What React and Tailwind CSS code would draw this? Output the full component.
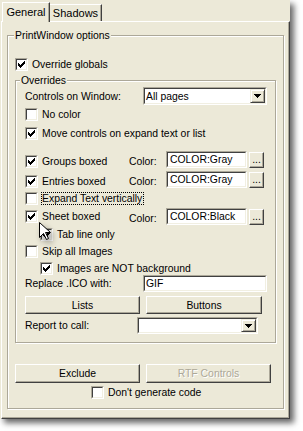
import React from 'react';

function CheckMark() {
  const px = [
    [6, 0], [5, 1], [6, 1], [0, 2], [4, 2], [5, 2], [6, 2],
    [0, 3], [1, 3], [3, 3], [4, 3], [5, 3], [0, 4], [1, 4], [2, 4], [3, 4], [4, 4],
    [1, 5], [2, 5], [3, 5], [2, 6],
  ];
  return (
    <svg width="7" height="7" className="block m-px" shapeRendering="crispEdges">
      {px.map(([x, y]) => (
        <rect key={x + '-' + y} x={x} y={y} width="1" height="1" fill="#000" />
      ))}
    </svg>
  );
}

function Check({ checked, className = '' }) {
  return (
    <span className={'block w-[13px] h-[13px] shrink-0 border border-t-[#ACA899] border-l-[#ACA899] border-b-white border-r-white ' + className}>
      <span className="block w-full h-full border border-t-[#404040] border-l-[#404040] border-b-[#F1EFE2] border-r-[#F1EFE2] bg-white">
        {checked && <CheckMark />}
      </span>
    </span>
  );
}

function Sunken({ className = '', children }) {
  return (
    <div className={'shrink-0 border border-t-[#ACA899] border-l-[#ACA899] border-b-white border-r-white ' + className}>
      <div className="flex h-full w-full items-center border border-t-[#404040] border-l-[#404040] border-b-[#F1EFE2] border-r-[#F1EFE2] bg-white">
        {children}
      </div>
    </div>
  );
}

function Combo({ className = '', value }) {
  return (
    <Sunken className={className}>
      <span className="flex-1 pl-[1px] whitespace-nowrap">{value}</span>
      <span className="flex h-full w-[15px] items-center justify-center border border-t-[#F1EFE2] border-l-[#F1EFE2] border-b-[#404040] border-r-[#404040] bg-[#ECE9D8] shadow-[inset_1px_1px_0_#fff,inset_-1px_-1px_0_#ACA899]">
        <svg width="7" height="4" className="block" shapeRendering="crispEdges">
          <path d="M0 0h7v1h-1v1h-1v1h-1v1h-1v-1h-1v-1h-1v-1h-1z" fill="#000" />
        </svg>
      </span>
    </Sunken>
  );
}

function Button({ className = '', disabled, children }) {
  return (
    <div
      className={
        'flex shrink-0 items-center justify-center border border-t-white border-l-white border-b-[#404040] border-r-[#404040] bg-[#ECE9D8] shadow-[inset_-1px_-1px_0_#ACA899] ' +
        (disabled ? 'text-[#ACA899] [text-shadow:1px_1px_0_#fff] ' : '') +
        className
      }
    >
      {children}
    </div>
  );
}

function CheckRow({ checked, label, className = '' }) {
  return (
    <div className={'flex h-[13px] items-center ' + className}>
      <Check checked={checked} />
      <span className="ml-[4px] whitespace-nowrap">{label}</span>
    </div>
  );
}

function ColorRow({ checked, label, value, className = '' }) {
  return (
    <div className={'flex h-[17px] items-start pl-[9px] ' + className}>
      <div className="flex w-[104px] h-[13px] mt-[4px] items-center">
        <Check checked={checked} />
        <span className="ml-[4px] whitespace-nowrap">{label}</span>
      </div>
      <span className="w-[37px] mt-[4px]">Color:</span>
      <Sunken className="w-[81px] h-[17px]">
        <span className="pl-[2px] whitespace-nowrap">{value}</span>
      </Sunken>
      <Button className="ml-[2px] mt-[1px] w-[15px] h-[16px] leading-[8px]">...</Button>
    </div>
  );
}

function Cursor() {
  return (
    <svg
      width="13"
      height="20"
      className="absolute left-[39px] top-[222px] drop-shadow-[3px_4px_3px_rgba(0,0,0,0.45)]"
    >
      <path
        d="M0.5 0.5 L0.5 15.5 L4.5 11.5 L7.5 17.5 L9.5 16.5 L6.5 10.5 L11.5 10.5 Z"
        fill="#fff"
        stroke="#000"
        strokeWidth="1"
      />
    </svg>
  );
}

export default function App() {
  return (
    <div className="relative w-[303px] h-[431px] overflow-hidden bg-white text-[10.4px] leading-[13px] text-black [font-family:'Liberation_Sans',Arial,sans-serif]">
      <div className="w-[290px] h-[419px] bg-[#ECE9D8] shadow-[4px_4px_6px_rgba(0,0,0,0.6)]">
        {/* tabs */}
        <div className="flex h-[21px] items-end pl-[2px]">
          <div className="relative z-10 -mb-px flex h-[20px] w-[48px] justify-center border-t border-l border-r border-t-white border-l-white border-r-[#404040] bg-[#ECE9D8] pt-[3px] shadow-[inset_-1px_0_0_#ACA899] text-[11px]">
            General
          </div>
          <div className="flex h-[17px] w-[52px] justify-center border-t border-r border-t-white border-r-[#404040] pt-[2px] shadow-[inset_-1px_0_0_#ACA899] text-[11px]">
            Shadows
          </div>
        </div>

        {/* panel */}
        <div className="ml-px w-[289px] h-[398px] border border-t-white border-l-white border-r-[#404040] border-b-[#404040] pl-[5px] pt-[7px] shadow-[inset_-1px_-1px_0_#ACA899]">
          <fieldset className="w-[277px] h-[380px] border border-[#ACA899] shadow-[1px_1px_0_#fff,inset_1px_1px_0_#fff]">
            <legend className="ml-[6px] px-[1px] bg-[#ECE9D8]">PrintWindow options</legend>

            <CheckRow checked label="Override globals" className="mt-[16px] ml-[7px]" />

            <fieldset className="mt-[3px] ml-[7px] w-[261px] h-[269px] border border-[#ACA899] shadow-[1px_1px_0_#fff,inset_1px_1px_0_#fff]">
              <legend className="ml-[4px] px-[1px] bg-[#ECE9D8]">Overrides</legend>

              <div className="flex h-[18px] items-center pl-[9px]">
                <span className="w-[118px]">Controls on Window:</span>
                <Combo className="w-[124px] h-[18px]" value="All pages" />
              </div>

              <CheckRow label="No color" className="mt-[3px] pl-[9px]" />
              <CheckRow checked label="Move controls on expand text or list" className="mt-[6px] pl-[9px]" />

              <ColorRow checked label="Groups boxed" value="COLOR:Gray" className="mt-[11px]" />
              <ColorRow checked label="Entries boxed" value="COLOR:Gray" className="mt-[3px]" />

              <div className="mt-[4px] flex h-[13px] items-center pl-[9px]">
                <Check />
                <span className="ml-[3px] border border-dotted border-black pr-[1px] leading-[11px] whitespace-nowrap">
                  Expand Text vertically
                </span>
              </div>

              <ColorRow checked label="Sheet boxed" value="COLOR:Black" className="mt-[3px] [&>div:first-child]:mt-[2px]" />

              <CheckRow checked label="Tab line only" className="mt-[3px] pl-[24px]" />
              <CheckRow label="Skip all Images" className="mt-[4px] pl-[9px]" />
              <CheckRow checked label="Images are NOT background" className="mt-[4px] pl-[24px]" />

              <div className="flex h-[17px] items-center pl-[9px]">
                <span className="w-[118px]">Replace .ICO with:</span>
                <Sunken className="w-[124px] h-[17px]">
                  <span className="pl-[1px]">GIF</span>
                </Sunken>
              </div>

              <div className="mt-[4px] flex gap-[6px] pl-[9px]">
                <Button className="w-[115px] h-[18px]">Lists</Button>
                <Button className="w-[116px] h-[18px]">Buttons</Button>
              </div>

              <div className="mt-[3px] flex h-[17px] items-center pl-[9px]">
                <span className="w-[112px]">Report to call:</span>
                <Combo className="w-[121px] h-[17px]" value="" />
              </div>
            </fieldset>

            <div className="mt-[21px] ml-[7px] flex gap-[6px]">
              <Button className="w-[125px] h-[19px]">Exclude</Button>
              <Button disabled className="w-[125px] h-[19px]">RTF Controls</Button>
            </div>

            <CheckRow label="Don't generate code" className="mt-[3px] ml-[83px]" />
          </fieldset>
        </div>
      </div>
      <Cursor />
    </div>
  );
}
